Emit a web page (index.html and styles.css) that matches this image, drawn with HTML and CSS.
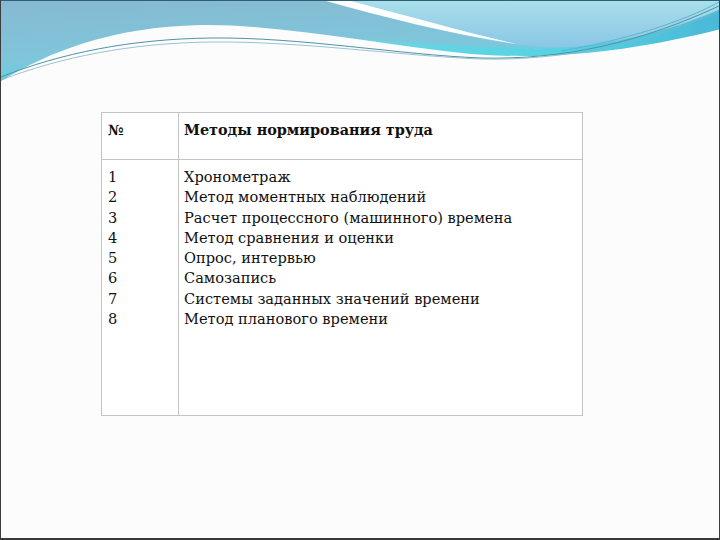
FILE: index.html
```html
<!DOCTYPE html>
<html lang="ru">
<head>
<meta charset="utf-8">
<title>Методы нормирования труда</title>
<link rel="stylesheet" href="styles.css">
</head>
<body>
<div class="slide">
  <svg class="wave" width="720" height="110" viewBox="0 0 720 110" aria-hidden="true">
    <defs>
      <linearGradient id="gLeft" x1="0" y1="0" x2="0.35" y2="1">
        <stop offset="0" stop-color="#86b9d2"/>
        <stop offset="0.55" stop-color="#7fc6da"/>
        <stop offset="1" stop-color="#3fdde8"/>
      </linearGradient>
      <linearGradient id="gRight" x1="0" y1="0" x2="0" y2="1">
        <stop offset="0" stop-color="#a9dfea"/>
        <stop offset="1" stop-color="#8ac6e6"/>
      </linearGradient>
      <linearGradient id="gBand" x1="0" y1="0" x2="1" y2="0">
        <stop offset="0" stop-color="#6fd6e4"/>
        <stop offset="0.6" stop-color="#55d3e3"/>
        <stop offset="1" stop-color="#49b9d8"/>
      </linearGradient>
    </defs>
    <rect x="0" y="0" width="720" height="100" fill="url(#gLeft)"/>
    <path d="M330,0 L720,0 L720,20 C660,40 600,48 540,46 C470,40 400,20 330,0 Z" fill="url(#gRight)"/>
    <path d="M325,0 L350,0 C410,16 460,30 515,43 C455,34 390,18 325,0 Z" fill="#ffffff"/>
    <path d="M320,36 C400,40 470,48 540,48 C610,46 670,30 720,8 L720,30 C640,48 560,60 470,54 C400,50 360,42 320,38 Z" fill="url(#gBand)"/>
    <path d="M0,80 C50,50 110,26 200,24 C280,23 380,44 470,53 C560,60 640,48 720,28 L720,110 L0,110 Z" fill="#fcfcfc"/>
    <path d="M0,76 C60,52 130,38 210,37 C300,36 400,54 480,57 C560,59 640,42 720,4" fill="none" stroke="#4f93a9" stroke-width="1"/>
    <path d="M0,79 C60,56 130,42 210,41 C300,40 400,55 480,58 C560,60 650,42 720,9" fill="none" stroke="#7fb6c6" stroke-width="0.8"/>
    <path d="M560,50 C620,40 680,22 720,0" fill="none" stroke="#5fb4cf" stroke-width="1"/>
  </svg>
  <table class="methods">
    <thead>
      <tr>
        <th class="num">№</th>
        <th class="name">Методы нормирования труда</th>
      </tr>
    </thead>
    <tbody>
      <tr>
        <td class="num">1<br>2<br>3<br>4<br>5<br>6<br>7<br>8</td>
        <td class="name">Хронометраж<br>Метод моментных наблюдений<br>Расчет процессного (машинного) времена<br>Метод сравнения и оценки<br>Опрос, интервью<br>Самозапись<br>Системы заданных значений времени<br>Метод планового времени</td>
      </tr>
    </tbody>
  </table>
</div>
</body>
</html>
```

FILE: styles.css
```css
html, body {
  margin: 0;
  padding: 0;
  background: #ffffff;
}

.slide {
  position: relative;
  width: 720px;
  height: 540px;
  box-sizing: border-box;
  border: 1px solid #3c3c3c;
  border-top-color: #2f5f70;
  border-bottom: 2px solid #3a3a3a;
  background: #fcfcfc;
  overflow: hidden;
  padding-top: 111px;
  padding-left: 100px;
  font-family: "DejaVu Serif", "Liberation Serif", serif;
  color: #111111;
}

.wave {
  position: absolute;
  left: 0;
  top: 0;
  display: block;
}

.methods {
  position: relative;
  border-collapse: collapse;
  width: 482px;
  height: 304px;
  background: #ffffff;
  font-size: 14.6px;
  line-height: 20.3px;
}

.methods th,
.methods td {
  border: 1px solid #c4c4c4;
  text-align: left;
  vertical-align: top;
  padding: 7px 6px 0 5px;
}

.methods th {
  height: 39px;
  font-size: 14.4px;
  font-weight: bold;
}

.methods td {
  padding-top: 7px;
}

.methods th.num,
.methods td.num {
  width: 64px;
  padding-left: 6px;
}
```
